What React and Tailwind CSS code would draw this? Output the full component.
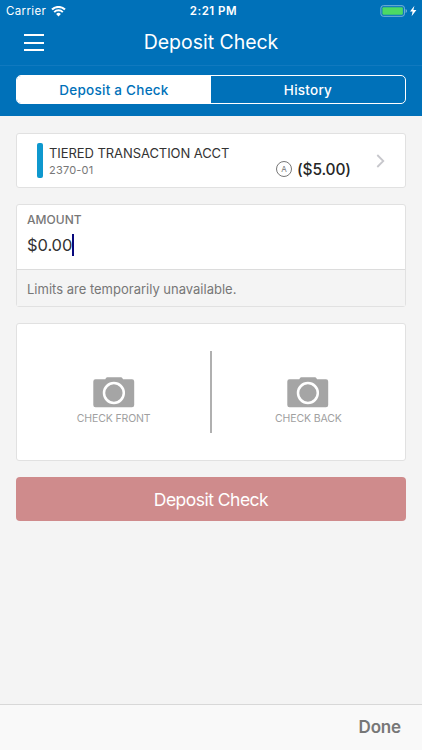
import React from "react";

function Wifi() {
  return (
    <svg className="ml-[5px] h-[11px] w-[15px]" viewBox="0 0 15 11" fill="none" stroke="white">
      <path d="M1 3.6a9.3 9.3 0 0 1 13 0" strokeWidth="2.1" />
      <path d="M3.2 6.1a6.1 6.1 0 0 1 8.6 0" strokeWidth="2" />
      <path d="M5.1 8a3.4 3.4 0 0 1 4.8 0L7.5 10.5Z" fill="white" stroke="none" />
    </svg>
  );
}

function Camera() {
  return (
    <svg className="h-[31px] w-[42px]" viewBox="0 0 42 31">
      <path
        d="M2.5 2.3H12.3L13 .9Q13.4.2 14.3.2H28Q28.9.2 29.3.9L30 2.3H39Q41.2 2.3 41.2 4.5V28Q41.2 30.3 39 30.3H2.5Q.3 30.3.3 28V4.5Q.3 2.3 2.5 2.3Z"
        fill="#a5a5a5"
      />
      <circle cx="20.9" cy="16" r="9.9" fill="none" stroke="white" strokeWidth="2.5" />
    </svg>
  );
}

function CheckSide({ label }) {
  return (
    <div className="flex flex-1 flex-col items-center pt-[53px]">
      <Camera />
      <span className="mt-[4px] text-[10.5px] leading-[14px] tracking-[-0.13px] text-[#a0a0a0]">{label}</span>
    </div>
  );
}

export default function App() {
  return (
    <div className="flex h-[750px] w-[422px] flex-col overflow-hidden bg-[#f4f4f4] font-['Inter',sans-serif] whitespace-nowrap">
      <header className="h-[116px] bg-[#0071b9] text-white">
        <div className="grid h-[22px] grid-cols-3 items-center pr-[5px] pl-[6px] text-[11.5px]">
          <div className="flex items-center">
            <span className="pt-[1px] tracking-[0.35px]">Carrier</span>
            <Wifi />
          </div>
          <div className="pt-[1px] pl-[4px] text-center font-semibold tracking-[0.5px]">2:21 PM</div>
          <div className="flex items-center justify-end">
            <svg className="h-[12px] w-[37px]" viewBox="0 0 37 12">
              <rect x=".9" y=".7" width="23.5" height="10.6" rx="2.4" fill="none" stroke="#79b4d8" />
              <rect x="2.4" y="2.2" width="20.5" height="7.6" rx="1" fill="#4cd964" />
              <path d="M25.6 4v4q1.4-.5 1.4-2t-1.4-2Z" fill="#79b4d8" />
              <path d="M34.4.8 30 6.5h2.6L31.6 11.2 36.4 5.1h-3Z" fill="white" />
            </svg>
          </div>
        </div>
        <div className="flex h-[44px] items-center border-b border-[#1079bf] pl-[24px]">
          <div className="flex w-[20px] flex-col gap-[5.5px] pb-[1.5px]">
            <div className="h-[2px] bg-white" />
            <div className="h-[2px] bg-white" />
            <div className="h-[2px] bg-white" />
          </div>
          <h1 className="w-[334px] pb-[2px] text-center text-[19.5px] tracking-[-0.03px]">Deposit Check</h1>
        </div>
        <div className="mx-[16px] mt-[9px] flex h-[29px] w-[390px] overflow-hidden rounded-[5px] border border-white text-[13.5px] font-medium tracking-[0.25px]">
          <div className="flex w-[194px] items-center justify-center bg-white pt-[1px] text-[#0071b9]">Deposit a Check</div>
          <div className="flex flex-1 items-center justify-center pt-[1px]">History</div>
        </div>
      </header>

      <main className="flex flex-1 flex-col px-[16px] pt-[17px]">
        <section className="flex h-[55px] w-[390px] rounded-[3px] border border-[#e1e1e1] bg-white pl-[20px]">
          <div className="mt-[9px] h-[35px] w-[6px] rounded-[2px] bg-[#0e98ce]" />
          <div className="ml-[6px] w-[227px] pt-[10px]">
            <div className="text-[13px] leading-[18px] tracking-[-0.07px] text-[#333]">TIERED TRANSACTION ACCT</div>
            <div className="text-[11px] leading-[17px] tracking-[0.2px] text-[#777]">2370-01</div>
          </div>
          <div className="mt-[27px] flex h-[16px] w-[16px] items-center justify-center rounded-full border border-[#777] text-[8px] text-[#777]">A</div>
          <div className="mt-[26px] ml-[5px] w-[79px] text-[15.5px] leading-[20px] font-medium tracking-[-0.15px] text-[#262626]">($5.00)</div>
          <svg className="mt-[20px] h-[14px] w-[9px]" viewBox="0 0 9 14" fill="none" stroke="#c7c7cc" strokeWidth="1.8">
            <path d="M1.3 1 7.3 7 1.3 13" />
          </svg>
        </section>

        <section className="mt-[16px] flex h-[103px] w-[390px] flex-col rounded-[3px] border border-[#e1e1e1] bg-white">
          <div className="h-[64px] pt-[7px] pl-[10px]">
            <div className="text-[12px] leading-[16px] font-medium tracking-[0.05px] text-[#777]">AMOUNT</div>
            <div className="mt-[5px] flex h-[23px] items-center text-[16.5px] text-[#333]">
              <span className="w-[44.5px] pt-[1px] tracking-[-0.1px]">$0.00</span>
              <span className="h-[22px] w-[2px] bg-[#08087c]" />
            </div>
          </div>
          <div className="flex flex-1 items-center border-t border-[#dcdcdc] bg-[#f4f4f4] pt-[3px] pl-[10px] text-[13px] text-[#777]">
            Limits are temporarily unavailable.
          </div>
        </section>

        <section className="mt-[16px] flex h-[138px] w-[390px] rounded-[3px] border border-[#e1e1e1] bg-white">
          <CheckSide label="CHECK FRONT" />
          <div className="mt-[27px] h-[82px] w-[1.5px] bg-[#b0b0b0]" />
          <CheckSide label="CHECK BACK" />
        </section>

        <button className="mt-[16px] h-[44px] w-[390px] rounded-[4px] bg-[#cf8b8c] pt-[2px] text-[17.5px] tracking-[-0.52px] text-white">
          Deposit Check
        </button>
      </main>

      <footer className="flex h-[46px] items-center justify-end border-t border-[#d8d8d8] bg-[#f9f9f9] pt-[1px] pr-[21px] text-[17px] font-semibold tracking-[-0.15px] text-[#777]">
        Done
      </footer>
    </div>
  );
}
